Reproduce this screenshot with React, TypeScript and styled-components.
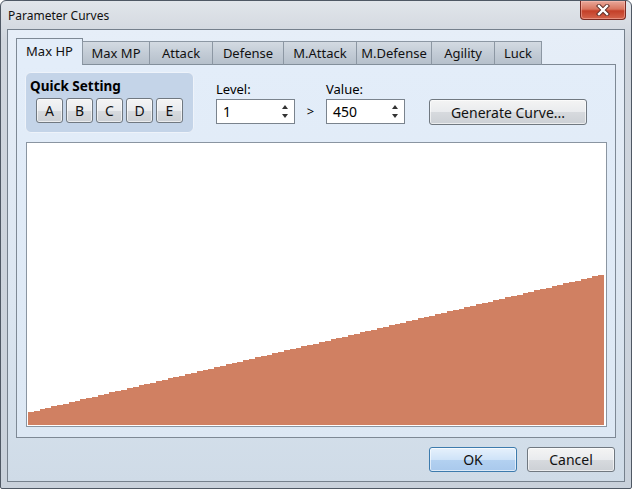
import React from 'react';
import styled, { createGlobalStyle } from 'styled-components';

const GlobalStyle = createGlobalStyle`
  html, body {
    margin: 0;
    padding: 0;
    background: #ffffff;
  }
  body {
    font-family: "Noto Sans", "Open Sans", sans-serif;
    font-size: 13px;
    color: #000;
  }
`;

const Window = styled.div`
  box-sizing: border-box;
  width: 632px;
  height: 489px;
  border: 1px solid #4f5864;
  border-radius: 6px 6px 2px 2px;
  padding: 0 6px 6px;
  display: flex;
  flex-direction: column;
  background: linear-gradient(180deg, #e1e5ea 0%, #cfd5dd 40px, #c9d1db 100%);
`;

const TitleBar = styled.div`
  height: 28px;
  display: flex;
  align-items: flex-start;
  justify-content: space-between;
`;

const Title = styled.div`
  font-size: 12px;
  padding: 6px 0 0 1px;
  color: #111;
`;

const CloseButton = styled.div`
  width: 46px;
  height: 19px;
  margin-right: -1px;
  border: 1px solid #7a2a22;
  border-top: none;
  border-radius: 0 0 4px 4px;
  box-sizing: border-box;
  display: flex;
  align-items: center;
  justify-content: center;
  background: linear-gradient(180deg, #e9a89a 0%, #d9755f 45%, #c43f28 55%, #d4644c 100%);
  box-shadow: inset 0 0 0 1px rgba(255, 200, 190, 0.45);
`;

const Client = styled.div`
  flex: 1;
  border: 1px solid #75808c;
  display: flex;
  flex-direction: column;
  padding: 8px 8px 0;
  background: linear-gradient(180deg, #e6eef8 0%, #dce6f1 60%, #cfdbe7 100%);
`;

const TabRow = styled.div`
  height: 27px;
  margin-bottom: -1px;
  padding-left: 1px;
  display: flex;
  align-items: flex-end;
  position: relative;
  z-index: 1;
`;

const Tab = styled.div<{ $w: number; $active?: boolean }>`
  box-sizing: border-box;
  width: ${(p) => p.$w}px;
  height: ${(p) => (p.$active ? 27 : 24)}px;
  margin-left: -1px;
  display: flex;
  align-items: center;
  justify-content: center;
  padding-bottom: ${(p) => (p.$active ? 2 : 0)}px;
  border: 1px solid ${(p) => (p.$active ? '#7e8995' : '#8c97a3')};
  border-bottom: ${(p) => (p.$active ? 'none' : '1px solid #838f9b')};
  background: ${(p) =>
    p.$active
      ? '#e3edf9'
      : 'linear-gradient(180deg, #d3dae2 0%, #c3ccd6 50%, #b6c0cb 100%)'};
  font-size: 13px;
  color: #111;
  white-space: nowrap;
`;

const Panel = styled.div`
  box-sizing: border-box;
  height: 374px;
  border: 1px solid #7e8995;
  background: linear-gradient(180deg, #e3edf9 0%, #dde8f4 100%);
  padding: 7px 8px 0 8px;
  display: flex;
  flex-direction: column;
`;

const Toolbar = styled.div`
  display: flex;
  align-items: flex-start;
`;

const QuickGroup = styled.div`
  box-sizing: border-box;
  width: 169px;
  height: 61px;
  border: 1px solid #eef3fa;
  border-radius: 6px;
  background: #c4d4e8;
  padding: 5px 0 0 4px;
  margin-right: 22px;
`;

const GroupTitle = styled.div`
  font-weight: 700;
  font-size: 13.5px;
  line-height: 17px;
`;

const LetterRow = styled.div`
  display: flex;
  gap: 3px;
  margin: 3px 0 0 6px;
`;

const Button = styled.div<{ $w: number; $h?: number; $default?: boolean }>`
  box-sizing: border-box;
  width: ${(p) => p.$w}px;
  height: ${(p) => p.$h ?? 25}px;
  display: flex;
  align-items: center;
  justify-content: center;
  border: 1px solid ${(p) => (p.$default ? '#3d7bad' : '#707880')};
  border-radius: 3px;
  background: ${(p) =>
    p.$default
      ? 'linear-gradient(180deg, #e6f1fc 0%, #cfe3f8 50%, #b3d1f1 51%, #a9c9ec 100%)'
      : 'linear-gradient(180deg, #f4f4f4 0%, #e9ebee 50%, #d7dade 51%, #ccd0d5 100%)'};
  box-shadow: inset 0 0 0 1px rgba(255, 255, 255, 0.6);
  font-size: 14px;
  color: #111;
`;

const Field = styled.div`
  padding-top: 9px;
  display: flex;
  flex-direction: column;
`;

const Label = styled.div`
  height: 18px;
  line-height: 16px;
  font-size: 13px;
`;

const SpinBox = styled.div`
  box-sizing: border-box;
  width: 79px;
  height: 25px;
  border: 1px solid #7a838d;
  background: #fff;
  display: flex;
  align-items: center;
  justify-content: space-between;
  padding: 0 5px 0 6px;
  font-size: 14px;
`;

const Arrows = styled.svg`
  width: 8px;
  height: 17px;
`;

const Greater = styled.div`
  margin-top: 27px;
  height: 25px;
  line-height: 25px;
  width: 31px;
  text-align: center;
  font-size: 13px;
`;

const ActionCell = styled.div`
  padding-top: 27px;
  margin-left: 24px;
`;

const Chart = styled.div`
  box-sizing: border-box;
  width: 581px;
  height: 285px;
  margin: 9px 0 0 1px;
  border: 1px solid #8a95a1;
  background: #fff;
`;

const Footer = styled.div`
  display: flex;
  justify-content: flex-end;
  gap: 10px;
  padding: 9px 1px 0 0;
`;

const TABS = [
  { name: 'Max HP', w: 67 },
  { name: 'Max MP', w: 68 },
  { name: 'Attack', w: 64 },
  { name: 'Defense', w: 72 },
  { name: 'M.Attack', w: 74 },
  { name: 'M.Defense', w: 76 },
  { name: 'Agility', w: 64 },
  { name: 'Luck', w: 48 },
];

const CHART_W = 579;
const CHART_H = 283;

const curvePath = () => {
  const levels = 99;
  const left = 1;
  const right = 577;
  const bottom = 282;
  const yStart = 269;
  const yEnd = 132;
  const step = (right - left) / levels;
  let d = `M${left} ${bottom} `;
  for (let i = 0; i < levels; i++) {
    const y = Math.round(yStart - ((yStart - yEnd) * i) / (levels - 1));
    const x0 = Math.round(left + i * step);
    const x1 = Math.round(left + (i + 1) * step);
    d += `L${x0} ${y} L${x1} ${y} `;
  }
  d += `L${right} ${bottom} Z`;
  return d;
};

const Spinner = ({ value }: { value: string }) => (
  <SpinBox>
    <span>{value}</span>
    <Arrows viewBox="0 0 8 17">
      <path d="M4 2 L7 6 L1 6 Z" fill="#333" />
      <path d="M4 15 L7 11 L1 11 Z" fill="#333" />
    </Arrows>
  </SpinBox>
);

const App = () => {
  return (
    <>
      <GlobalStyle />
      <Window>
        <TitleBar>
          <Title>Parameter Curves</Title>
          <CloseButton>
            <svg width="14" height="12" viewBox="0 0 14 12">
              <path d="M3 2 L11 10 M11 2 L3 10" stroke="#5a2a24" strokeWidth="4.2" strokeLinecap="square" />
              <path d="M3 2 L11 10 M11 2 L3 10" stroke="#ffffff" strokeWidth="2.4" strokeLinecap="square" />
            </svg>
          </CloseButton>
        </TitleBar>
        <Client>
          <TabRow>
            {TABS.map((t, i) => (
              <Tab key={t.name} $w={t.w} $active={i === 0}>
                {t.name}
              </Tab>
            ))}
          </TabRow>
          <Panel>
            <Toolbar>
              <QuickGroup>
                <GroupTitle>Quick Setting</GroupTitle>
                <LetterRow>
                  {['A', 'B', 'C', 'D', 'E'].map((l) => (
                    <Button key={l} $w={27} $h={25}>
                      {l}
                    </Button>
                  ))}
                </LetterRow>
              </QuickGroup>
              <Field>
                <Label>Level:</Label>
                <Spinner value="1" />
              </Field>
              <Greater>&gt;</Greater>
              <Field>
                <Label>Value:</Label>
                <Spinner value="450" />
              </Field>
              <ActionCell>
                <Button $w={158} $h={26}>Generate Curve...</Button>
              </ActionCell>
            </Toolbar>
            <Chart>
              <svg width={CHART_W} height={CHART_H} viewBox={`0 0 ${CHART_W} ${CHART_H}`} shapeRendering="crispEdges">
                <path d={curvePath()} fill="#d08062" />
              </svg>
            </Chart>
          </Panel>
          <Footer>
            <Button $w={88} $default>OK</Button>
            <Button $w={88}>Cancel</Button>
          </Footer>
        </Client>
      </Window>
    </>
  );
};

export default App;
